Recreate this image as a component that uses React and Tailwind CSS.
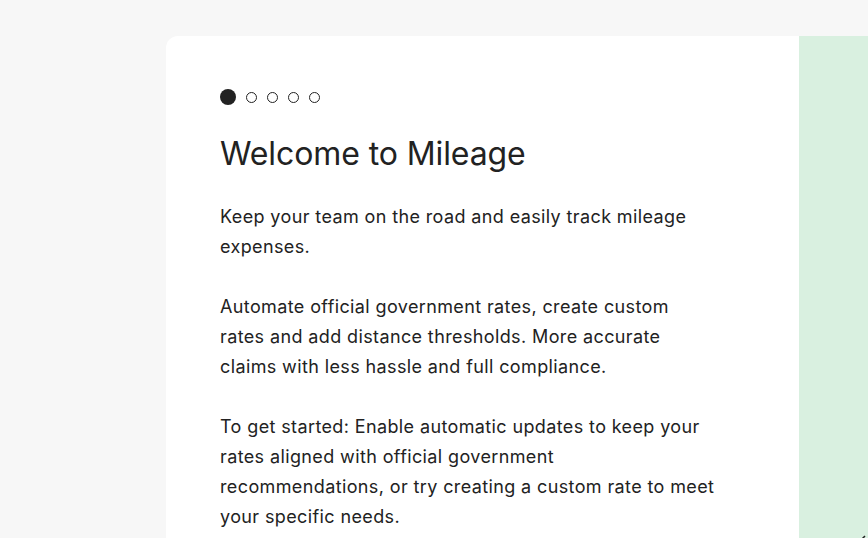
import React from 'react';

export default function App() {
  const steps = [true, false, false, false, false];

  return (
    <div className="h-[538px] w-[868px] overflow-hidden bg-[#f7f7f7] pt-[36px] pl-[166px]" style={{ fontFamily: 'Inter, "Noto Sans", sans-serif' }}>
      <div className="flex h-[600px] w-[760px] overflow-hidden rounded-tl-[12px] bg-white">
        {/* Left: content */}
        <div className="w-[633px] shrink-0 pl-[54px] pt-[53px] text-[#222222]">
          <div className="flex items-center">
            {steps.map((active, i) =>
              active ? (
                <span key={i} className="h-[16px] w-[16px] rounded-full bg-[#222222]" />
              ) : (
                <span key={i} className="ml-[10px] h-[11px] w-[11px] rounded-full border-[1.5px] border-[#222222]" />
              )
            )}
          </div>
          <h1 className="mt-[29px] text-[32px] leading-[40px] font-normal tracking-[-0.1px]">Welcome to Mileage</h1>
          <div className="mt-[28px] w-[496px] text-[18px] leading-[30px] tracking-[0.38px]">
            <p>Keep your team on the road and easily track mileage expenses.</p>
            <p className="mt-[30px]">
              Automate official government rates, create custom rates and add distance thresholds. More accurate claims with less hassle and full compliance.
            </p>
            <p className="mt-[30px]">
              To get started: Enable automatic updates to keep your rates aligned with official government recommendations, or try creating a custom rate to meet your specific needs.
            </p>
          </div>
        </div>

        {/* Right: illustration panel */}
        <div className="relative flex-1 bg-[#d9f0e0]">
          <svg className="absolute left-[60px] top-[496px]" width="10" height="10" viewBox="0 0 10 10">
            <path d="M2 8 L6 4" stroke="#222" strokeWidth="1.5" fill="none" />
          </svg>
        </div>
      </div>
    </div>
  );
}
